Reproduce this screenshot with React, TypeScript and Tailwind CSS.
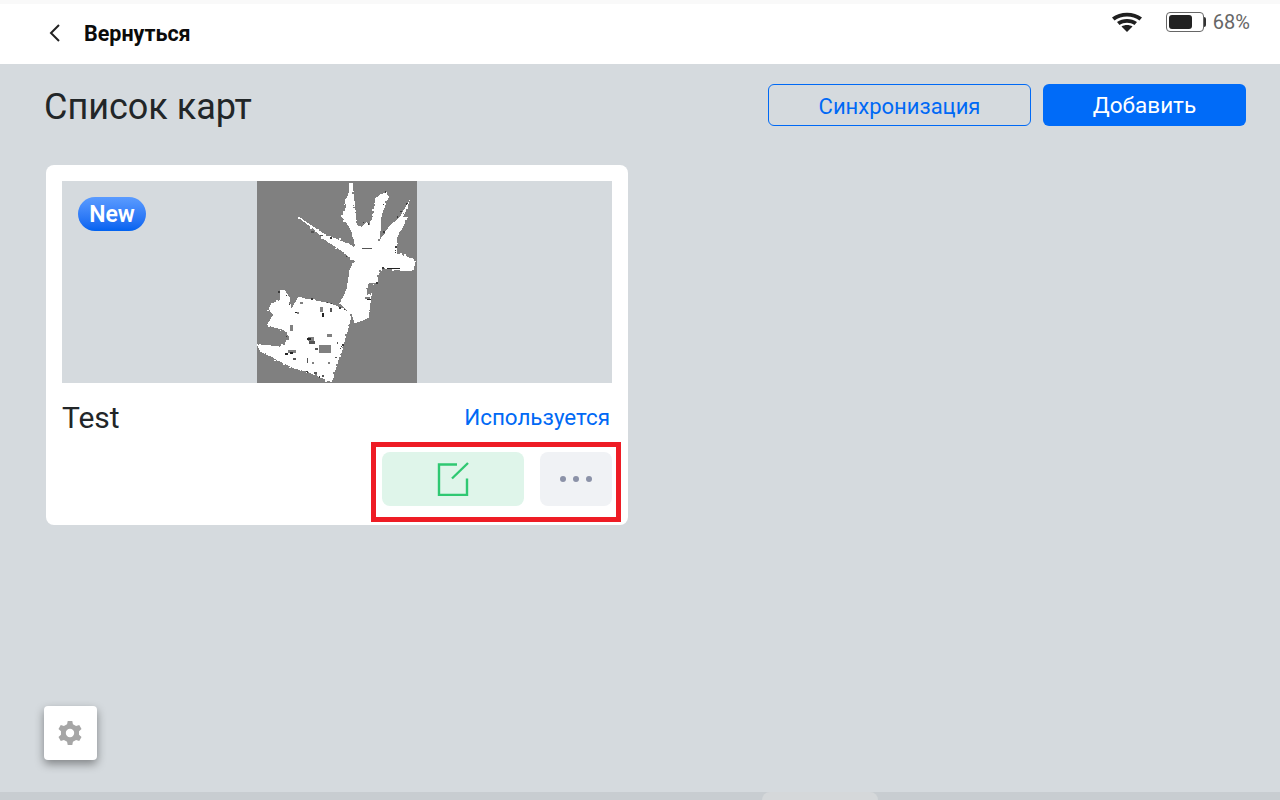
import React from "react";

const upper: [number, number][] = [[405,70],[422,58],[440,50],[445,68],[436,92],[425,120],[422,160],[420,195],[436,172],[450,150],[466,138],[480,125],[495,98],[510,75],[500,102],[490,125],[505,125],[488,158],[470,190],[472,212],[470,235],[498,245],[528,253],[524,272],[520,290],[475,286],[430,280],[415,300],[415,325],[385,325],[380,360],[395,355],[392,380],[385,430],[345,445],[335,420],[318,402],[300,385],[312,360],[320,340],[325,310],[330,280],[345,260],[300,225],[245,188],[225,165],[170,125],[178,126],[250,175],[300,196],[345,215],[338,180],[330,160],[305,125],[318,100],[315,75],[325,60],[328,40],[327,25],[338,25],[342,60],[346,110],[350,150],[365,155],[380,142],[390,150],[400,120]];
const lower: [number, number][] = [[120,345],[135,345],[148,368],[155,400],[175,365],[222,375],[270,385],[310,400],[335,420],[328,450],[320,480],[305,525],[290,575],[275,622],[238,606],[200,590],[165,582],[130,565],[95,546],[60,530],[52,510],[80,510],[120,515],[150,490],[130,465],[105,458],[80,450],[100,420],[85,402],[95,385],[120,375]];

const grayHoles: [number, number, number, number][] = [
  [238,510,36,24],[260,476,16,10],[240,395,10,16],[205,485,16,14],[145,525,22,8],[215,560,8,8],[170,410,8,6],[265,560,6,8],[150,450,10,18],[132,490,12,8],[375,365,16,8],[180,380,10,6],
];
const specks: [number, number, number, number][] = [
  [200,488,14,8],[208,498,16,8],[225,518,10,6],[150,530,10,8],[160,548,8,6],[200,550,3,14],[135,535,8,4],[222,590,8,6],[245,600,6,6],
  [165,410,6,4],[290,500,5,8],[285,545,5,5],[245,415,6,10],[270,400,5,10],[365,218,30,3],[440,280,40,3],[212,168,10,6],[240,180,8,4],[380,372,14,4],
];

function edgeNoise(points: [number, number][], gap: number) {
  const out: { x: number; y: number; w: number; c: string }[] = [];
  let n = 7;
  points.forEach(([x0, y0], i) => {
    const [x1, y1] = points[(i + 1) % points.length];
    const len = Math.hypot(x1 - x0, y1 - y0);
    for (let d = 0; d < len; d += gap) {
      n = (n * 131 + 17) % 1009;
      const t = d / len;
      const ox = (n % 9) - 4;
      const oy = ((n >> 3) % 9) - 4;
      const kind = n % 9;
      if (kind > 4) continue;
      out.push({
        x: x0 + (x1 - x0) * t + ox - 2,
        y: y0 + (y1 - y0) * t + oy - 2,
        w: 3 + (n % 4),
        c: kind === 0 ? "#3a3a3a" : kind === 1 ? "#808080" : "#ffffff",
      });
    }
  });
  return out;
}

function MapPreview() {
  const noise = [...edgeNoise(upper, 14), ...edgeNoise(lower, 9)];
  return (
    <svg viewBox="51 18 480 606" className="block h-[202px] w-[160px]" shapeRendering="crispEdges">
      <rect x="51" y="18" width="480" height="606" fill="#808080" />
      <polygon fill="#ffffff" points={upper.map((p) => p.join(",")).join(" ")} />
      <polygon fill="#ffffff" points={lower.map((p) => p.join(",")).join(" ")} />
      {grayHoles.map(([x, y, w, h], i) => (
        <rect key={i} x={x} y={y} width={w} height={h} fill="#808080" />
      ))}
      {specks.map(([x, y, w, h], i) => (
        <rect key={i} x={x} y={y} width={w} height={h} fill={i % 3 === 0 ? "#222222" : "#555555"} />
      ))}
      {noise.map((r, i) => (
        <rect key={i} x={r.x} y={r.y} width={r.w} height={r.w} fill={r.c} />
      ))}
    </svg>
  );
}

function gearPath() {
  const cx = 13, cy = 13, R = 12.2, r = 9.2, teeth = 6;
  const pts: string[] = [];
  for (let i = 0; i < teeth; i++) {
    const a = (i * Math.PI * 2) / teeth - Math.PI / 2;
    const step = Math.PI / teeth;
    [[-0.62, r], [-0.36, R], [0.36, R], [0.62, r]].forEach(([f, rad]) => {
      const t = a + f * step;
      pts.push(`${(cx + rad * Math.cos(t)).toFixed(2)} ${(cy + rad * Math.sin(t)).toFixed(2)}`);
    });
  }
  return `M${pts.join(" L")} Z M13 8.800 a4.200 4.200 0 1 0 0 8.400 a4.200 4.200 0 1 0 0-8.400 Z`;
}

export default function App() {
  return (
    <div className="relative flex h-[800px] w-[1280px] flex-col overflow-hidden bg-[#d5dade] font-['Roboto',sans-serif]">
      <div className="h-[4px] shrink-0 bg-[#f9f9f9]" />
      <header className="flex h-[60px] shrink-0 items-start justify-between bg-white pl-[46px] pr-[30px]">
        <div className="flex h-[58px] items-center">
          <svg width="18" height="20" viewBox="0 0 18 20" fill="none" stroke="#222222" strokeWidth="2">
            <path d="M13 2 L5 10 L13 18" />
          </svg>
          <span className="ml-[20px] pt-[2px] text-[21.500px] font-bold text-[#0b0b0b]">Вернуться</span>
        </div>
        <div className="flex items-center pt-[7px]">
          <svg width="30" height="22" viewBox="0 0 30 22" fill="#1f1f1f">
            <path d="M0 6.500 C8 0 22 0 30 6.500 L27.500 9.500 C20.500 4 9.500 4 2.500 9.500 Z" />
            <path d="M5 11 C10.500 7 19.500 7 25 11 L22.500 14 C18 11 12 11 7.500 14 Z" />
            <path d="M9.500 15.500 C12.500 13.500 17.500 13.500 20.500 15.500 L15 21 Z" />
          </svg>
          <div className="ml-[24px] flex items-center">
            <div className="flex h-[20px] w-[38px] items-center rounded-[4px] border border-[#666666] px-[2px]">
              <div className="h-[14px] w-[23px] rounded-[3px] bg-[#222222]" />
            </div>
            <div className="h-[10px] w-[2px] rounded-r-[2px] bg-[#333333]" />
          </div>
          <span className="ml-[7px] text-[20px] leading-[20px] text-[#666666]">68%</span>
        </div>
      </header>

      <main className="flex min-h-0 flex-1 flex-col pl-[44px] pr-[34px]">
        <div className="mt-[20px] flex h-[42px] items-center justify-between">
          <h1 className="pt-[3px] text-[36px] font-normal leading-[44px] text-[#222628]">Список карт</h1>
          <div className="flex gap-[12px]">
            <button className="h-[42px] w-[263px] rounded-[6px] border border-[#0069f5] pt-[2px] text-[22px] text-[#0069f5]">Синхронизация</button>
            <button className="h-[42px] w-[203px] rounded-[6px] bg-[#006bf8] pt-[2px] text-[22.500px] text-white">Добавить</button>
          </div>
        </div>

        <section className="relative ml-[2px] mt-[39px] h-[360px] w-[582px] rounded-[8px] bg-white p-[16px]">
          <div className="relative flex h-[202px] w-[550px] justify-center bg-[#d5dade]">
            <MapPreview />
            <span className="absolute left-[16px] top-[16px] flex h-[34px] w-[68px] items-center justify-center rounded-[17px] bg-gradient-to-b from-[#5a9bff] to-[#0062f0] text-[23px] font-semibold leading-none text-white">New</span>
          </div>
          <div className="mt-[16px] flex h-[38px] items-center justify-between pr-[2px]">
            <span className="text-[30px] leading-[38px] text-[#222628]">Test</span>
            <span className="text-[22.400px] text-[#0069f5]">Используется</span>
          </div>
          <div className="mt-[15px] flex justify-end gap-[16px]">
            <button className="flex h-[54px] w-[142px] items-center justify-center rounded-[8px] bg-[#dff5ea]">
              <svg width="32" height="34" viewBox="0 0 32 34" fill="none" stroke="#2fc872" strokeWidth="2.400">
                <path d="M20 2.500 H2 V33 H30 V16.500" />
                <path d="M15 16.500 L31 1" />
              </svg>
            </button>
            <button className="flex h-[54px] w-[72px] items-center justify-center gap-[7px] rounded-[8px] bg-[#f0f2f5]">
              <span className="h-[6px] w-[6px] rounded-full bg-[#8b92a8]" />
              <span className="h-[6px] w-[6px] rounded-full bg-[#8b92a8]" />
              <span className="h-[6px] w-[6px] rounded-full bg-[#8b92a8]" />
            </button>
          </div>
          <div className="absolute left-[325px] top-[277px] h-[80px] w-[250px] border-[5px] border-[#ee1c25]" />
        </section>
      </main>

      <button className="absolute left-[44px] top-[706px] flex h-[54px] w-[53px] items-center justify-center rounded-[4px] bg-white pr-[1px] shadow-[0_4px_10px_rgba(0,0,0,0.4)]">
        <svg width="26" height="26" viewBox="0 0 26 26" fill="#a6a6a6">
          <path fillRule="evenodd" d={gearPath()} />
        </svg>
      </button>

      <div className="flex h-[8px] shrink-0 justify-center bg-[#c8cdd1]">
        <div className="ml-[360px] h-[8px] w-[116px] rounded-t-[24px] bg-[#d5d8da]" />
      </div>
    </div>
  );
}
